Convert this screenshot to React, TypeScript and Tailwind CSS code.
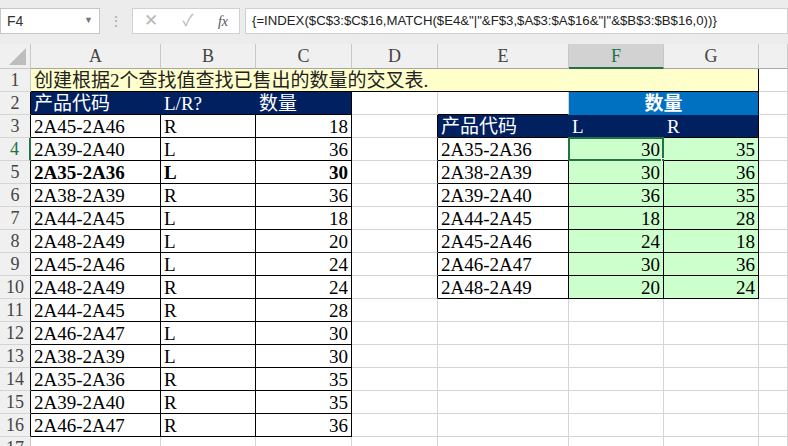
import React from "react";

const SERIF = "font-['Liberation_Serif','Noto_Sans_CJK_SC',serif]";
const SANS = "font-['Liberation_Sans','Noto_Sans_CJK_SC',sans-serif]";

const COLS = ["A", "B", "C", "D", "E", "F", "G", ""];

const LEFT: [string, string, number][] = [
  ["2A45-2A46", "R", 18],
  ["2A39-2A40", "L", 36],
  ["2A35-2A36", "L", 30],
  ["2A38-2A39", "R", 36],
  ["2A44-2A45", "L", 18],
  ["2A48-2A49", "L", 20],
  ["2A45-2A46", "L", 24],
  ["2A48-2A49", "R", 24],
  ["2A44-2A45", "R", 28],
  ["2A46-2A47", "L", 30],
  ["2A38-2A39", "L", 30],
  ["2A35-2A36", "R", 35],
  ["2A39-2A40", "R", 35],
  ["2A46-2A47", "R", 36],
];

const CROSS: [string, number, number][] = [
  ["2A35-2A36", 30, 35],
  ["2A38-2A39", 30, 36],
  ["2A39-2A40", 36, 35],
  ["2A44-2A45", 18, 28],
  ["2A45-2A46", 24, 18],
  ["2A46-2A47", 30, 36],
  ["2A48-2A49", 20, 24],
];

function Cell({ className = "", children }: { className?: string; children?: React.ReactNode }) {
  return (
    <div className={`relative border-r border-b whitespace-nowrap overflow-visible px-[3px] leading-[24px] text-[19px] ${className}`}>
      {children}
    </div>
  );
}

function RowHead({ n, className = "" }: { n: number; className?: string }) {
  const sel = n === 4;
  return (
    <div
      className={`bg-[#f0f0f0] border-b border-b-[#d4d4d4] text-center leading-[23px] text-[18px] ${SERIF} ${
        sel ? "bg-[#d6d6d6] text-[#217346] border-r-2 border-r-[#217346]" : "text-[#444] border-r " + className
      }`}
    >
      {n}
    </div>
  );
}

export default function App() {
  const rows: React.ReactNode[] = [];

  // row 1
  rows.push(
    <React.Fragment key="r1">
      <RowHead n={1} className="border-r-[#c8c8c8]" />
      <Cell className={`col-span-7 bg-[#ffffcc] border-black text-[#222] ${SERIF}`}>
        创建根据2个查找值查找已售出的数量的交叉表.
      </Cell>
      <Cell className="border-[#d4d4d4]" />
    </React.Fragment>
  );

  // row 2
  rows.push(
    <React.Fragment key="r2">
      <RowHead n={2} className="border-r-black" />
      <Cell className={`bg-[#002060] border-r-[#002060] border-b-black text-white ${SERIF}`}>产品代码</Cell>
      <Cell className={`bg-[#002060] border-r-[#002060] border-b-black text-white ${SERIF}`}>L/R?</Cell>
      <Cell className={`bg-[#002060] border-r-black border-b-black text-white ${SERIF}`}>数量</Cell>
      <Cell className="border-[#d4d4d4]" />
      <Cell className="border-[#d4d4d4] border-b-black" />
      <Cell className={`col-span-2 bg-[#0070c0] border-r-black border-b-[#0070c0] text-white text-center font-bold ${SERIF}`}>
        数量
      </Cell>
      <Cell className="border-[#d4d4d4]" />
    </React.Fragment>
  );

  for (let i = 0; i < 15; i++) {
    const r = i + 3;
    const left = LEFT[i];
    const bold = r === 5 ? "font-bold" : "";
    const ci = r - 4;
    const cross = ci >= 0 ? CROSS[ci] : undefined;
    rows.push(
      <React.Fragment key={"r" + r}>
        <RowHead n={r} className={left ? "border-r-black" : "border-r-[#c8c8c8]"} />
        {left ? (
          <>
            <Cell className={`border-black text-black ${SERIF} ${bold}`}>{left[0]}</Cell>
            <Cell className={`border-black text-black ${SERIF} ${bold}`}>{left[1]}</Cell>
            <Cell className={`border-black text-black text-right ${SERIF} ${bold}`}>{left[2]}</Cell>
          </>
        ) : (
          <>
            <Cell className="border-[#d4d4d4]" />
            <Cell className="border-[#d4d4d4]" />
            <Cell className="border-[#d4d4d4]" />
          </>
        )}
        <Cell className={`border-[#d4d4d4] ${r <= 10 ? "border-r-black" : ""}`} />
        {r === 3 ? (
          <>
            <Cell className={`bg-[#002060] border-r-[#002060] border-b-black text-white ${SERIF}`}>产品代码</Cell>
            <Cell className={`bg-[#002060] border-r-[#002060] border-b-black text-white ${SERIF}`}>L</Cell>
            <Cell className={`bg-[#002060] border-r-black border-b-black text-white ${SERIF}`}>R</Cell>
          </>
        ) : cross ? (
          <>
            <Cell className={`border-black text-black ${SERIF}`}>{cross[0]}</Cell>
            <Cell className={`bg-[#ccffcc] border-black text-black text-right ${SERIF}`}>
              {cross[1]}
              {r === 4 && (
                <>
                  <span className="absolute -left-[1px] -top-[1px] -right-[1px] -bottom-[1px] border-2 border-[#217346]" />
                  <span className="absolute -right-[4px] -bottom-[4px] w-[6px] h-[6px] bg-[#217346] border border-white" />
                </>
              )}
            </Cell>
            <Cell className={`bg-[#ccffcc] border-black text-black text-right ${SERIF}`}>{cross[2]}</Cell>
          </>
        ) : (
          <>
            <Cell className="border-[#d4d4d4]" />
            <Cell className="border-[#d4d4d4]" />
            <Cell className="border-[#d4d4d4]" />
          </>
        )}
        <Cell className="border-[#d4d4d4]" />
      </React.Fragment>
    );
  }

  return (
    <div className="w-[788px] h-[446px] overflow-hidden bg-white flex flex-col">
      {/* formula bar */}
      <div className={`h-[44px] shrink-0 bg-[#ececec] flex items-start pt-[8px] ${SANS}`}>
        <div className="w-[100px] h-[26px] bg-white border border-[#c6c6c6] flex items-center justify-between pl-[6px] pr-[6px]">
          <span className="text-[14px] text-[#333]">F4</span>
          <span className="text-[9px] text-[#777]">▼</span>
        </div>
        <div className="w-[32px] h-[26px] flex items-center justify-center text-[#a8a8a8] text-[14px]">⋮</div>
        <div className="w-[108px] h-[26px] bg-white border border-[#d0d0d0] flex items-center">
          <span className="w-[36px] text-center text-[#b8b8b8] text-[17px]">✕</span>
          <span className="w-[38px] text-center text-[#b8b8b8] text-[16px]">✓</span>
          <span className={`w-[32px] text-center text-[#555] text-[14px] italic ${SERIF}`}>fx</span>
        </div>
        <div className="ml-[5px] flex-1 h-[26px] bg-white border border-[#d0d0d0] flex items-center pl-[6px] text-[13.2px] text-[#222] whitespace-nowrap">
          {'{=INDEX($C$3:$C$16,MATCH($E4&"|"&F$3,$A$3:$A$16&"|"&$B$3:$B$16,0))}'}
        </div>
      </div>

      {/* sheet */}
      <div className="grid grid-cols-[31px_130px_95px_96px_86px_131px_95px_95px_1fr] grid-rows-[25px] auto-rows-[23px]">
        <div className="relative bg-[#f0f0f0] border-r border-b border-[#c8c8c8]">
          <svg className="absolute right-[4px] bottom-[3px]" width="17" height="17" viewBox="0 0 17 17">
            <polygon points="17,0 17,17 0,17" fill="#bdbdbd" />
          </svg>
        </div>
        {COLS.map((c, i) => (
          <div
            key={i}
            className={`text-center leading-[24px] text-[18px] border-r border-[#c8c8c8] ${SERIF} ${
              c === "F"
                ? "bg-[#d2d2d2] text-[#217346] border-b-2 border-b-[#217346]"
                : "bg-[#f0f0f0] text-[#444] border-b border-b-[#a6a6a6]"
            }`}
          >
            {c}
          </div>
        ))}
        {rows}
      </div>
    </div>
  );
}
